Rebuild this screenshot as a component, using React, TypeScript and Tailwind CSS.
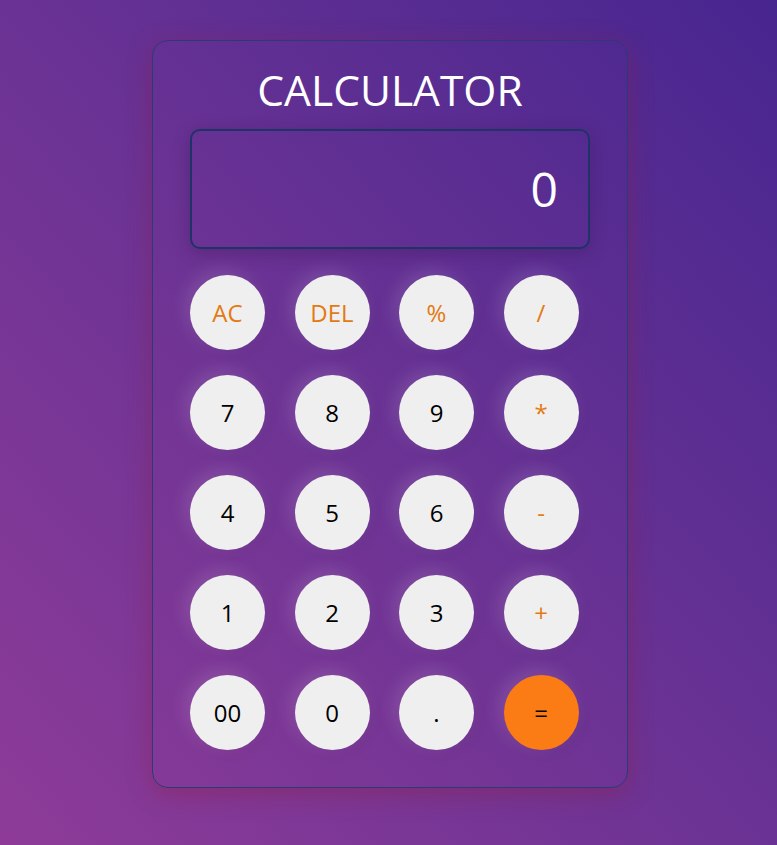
import { useState } from 'react';

const keys: { label: string; kind: 'op' | 'num' | 'eq' }[] = [
    { label: 'AC', kind: 'op' },
    { label: 'DEL', kind: 'op' },
    { label: '%', kind: 'op' },
    { label: '/', kind: 'op' },
    { label: '7', kind: 'num' },
    { label: '8', kind: 'num' },
    { label: '9', kind: 'num' },
    { label: '*', kind: 'op' },
    { label: '4', kind: 'num' },
    { label: '5', kind: 'num' },
    { label: '6', kind: 'num' },
    { label: '-', kind: 'op' },
    { label: '1', kind: 'num' },
    { label: '2', kind: 'num' },
    { label: '3', kind: 'num' },
    { label: '+', kind: 'op' },
    { label: '00', kind: 'num' },
    { label: '0', kind: 'num' },
    { label: '.', kind: 'num' },
    { label: '=', kind: 'eq' },
];

export default function App() {
    const [display, setDisplay] = useState('0');

    const press = (label: string) => {
        if (label === 'AC') return setDisplay('0');
        if (label === 'DEL') return setDisplay((d) => (d.length > 1 ? d.slice(0, -1) : '0'));
        if (label === '=') {
            try {
                // eslint-disable-next-line no-new-func
                const result = Function(`return (${display})`)();
                setDisplay(String(result));
            } catch {
                setDisplay('Error');
            }
            return;
        }
        setDisplay((d) => (d === '0' && label !== '.' ? label : d + label));
    };

    return (
        <div
            className="min-h-screen w-full flex justify-center pl-[3px] bg-gradient-to-tr from-[#8e3b98] to-[#47258f]"
            style={{ fontFamily: '"Open Sans", "Noto Sans", sans-serif' }}
        >
            <div className="mt-[40px] mb-[58px] w-[476px] h-fit border border-[#2c3a78] rounded-[16px] px-[37px] pt-[20px] pb-[37px] shadow-[0_6px_24px_rgba(140,30,70,0.45)]">
                <h1 className="text-center text-[42.5px] font-normal text-white leading-[1.35]">CALCULATOR</h1>

                {/* Display */}
                <div className="mt-[11px] h-[120px] w-[400px] border-2 border-[#1f3466] rounded-[10px] flex items-center justify-end pr-[30px] shadow-[0_4px_16px_rgba(60,20,80,0.35)]">
                    <span className="text-[48px] text-white leading-none">{display}</span>
                </div>

                {/* Keypad */}
                <div className="mt-[26px] grid grid-cols-[repeat(4,75px)] gap-x-[29.5px] gap-y-[25px]">
                    {keys.map((k) => (
                        <button
                            key={k.label}
                            onClick={() => press(k.label)}
                            className={`w-[75px] h-[75px] rounded-full flex items-center justify-center text-[24px] font-medium shadow-[-5px_-5px_18px_rgba(255,255,255,0.13),4px_4px_14px_rgba(0,0,0,0.04)] ${
                                k.kind === 'eq'
                                    ? 'bg-[#fb7c14] text-black'
                                    : k.kind === 'op'
                                      ? 'bg-[#efefef] text-[#e47a12]'
                                      : 'bg-[#efefef] text-black'
                            }`}
                        >
                            {k.label}
                        </button>
                    ))}
                </div>
            </div>
        </div>
    );
}
